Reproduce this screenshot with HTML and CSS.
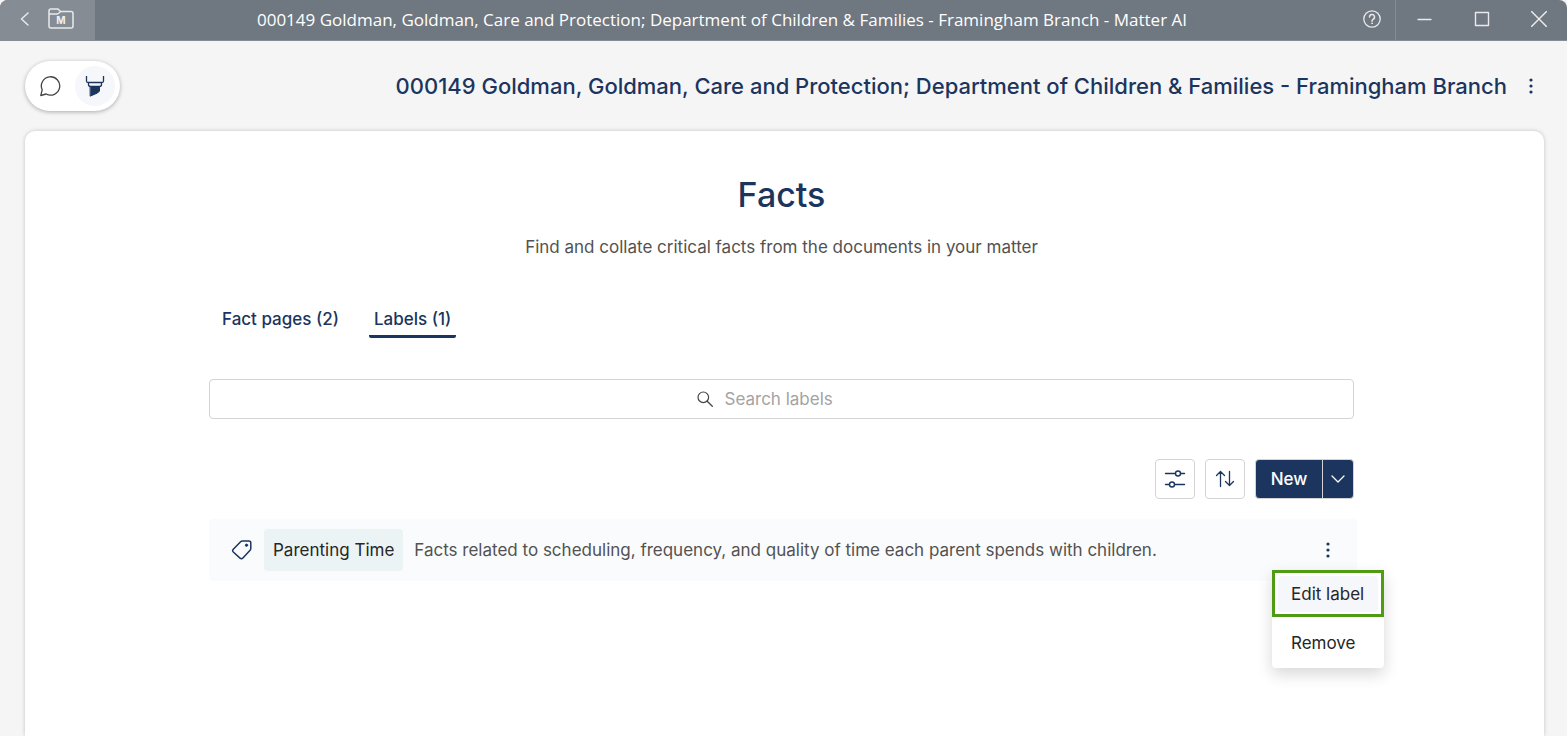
FILE: index.html
```
<!DOCTYPE html>
<html lang="en">
  <head>
    <meta charset="utf-8">
    <title>Matter AI</title>
    <link rel="stylesheet" href="styles.css">
  </head>
  <body>

    <header class="titlebar">
      <div class="titlebar-left">
        <button type="button" class="titlebar-btn back-btn" aria-label="Back">
          <svg width="10" height="16" viewBox="0 0 10 16"><path d="M8 2L1.500 8L8 14" stroke-width="1.500"/></svg>
        </button>
        <button type="button" class="titlebar-btn" aria-label="Matter">
          <svg width="26" height="22" viewBox="0 0 26 22">
            <path d="M1 5.500V3a2 2 0 0 1 2-2h7l2.500 2.500H23a2 2 0 0 1 2 2V18a2 2 0 0 1-2 2H3a2 2 0 0 1-2-2zM1 6h8.500L13 3.500" stroke-width="1.500"/>
            <text x="13" y="16" class="folder-letter">M</text>
          </svg>
        </button>
      </div>
      <div class="titlebar-text">000149 Goldman, Goldman, Care and Protection; Department of Children &amp; Families - Framingham Branch - Matter AI</div>
      <button type="button" class="titlebar-btn help-btn" aria-label="Help">
        <svg width="18" height="18" viewBox="0 0 18 18">
          <circle cx="9" cy="9" r="8.200" stroke-width="1.300"/>
          <path d="M6.500 7a2.500 2.500 0 1 1 3.700 2.200C9.400 9.700 9 10.100 9 11.200" stroke-width="1.500"/>
          <circle cx="9" cy="13.300" r=".5" stroke-width="1"/>
        </svg>
      </button>
      <div class="window-controls">
        <button type="button" class="titlebar-btn" aria-label="Minimize">
          <svg width="16" height="16" viewBox="0 0 16 16"><path d="M1 8.500h13" stroke-width="1.300"/></svg>
        </button>
        <button type="button" class="titlebar-btn" aria-label="Maximize">
          <svg width="16" height="16" viewBox="0 0 16 16"><path d="M1.500 1.500h13v13h-13z" stroke-width="1.400"/></svg>
        </button>
        <button type="button" class="titlebar-btn" aria-label="Close">
          <svg width="16" height="16" viewBox="0 0 16 16"><path d="M.5.500l15 15M15.500.500l-15 15" stroke-width="1.500"/></svg>
        </button>
      </div>
    </header>

    <div class="page-header">
      <nav class="mode-switch">
        <button type="button" class="mode-btn" aria-label="Chat">
          <svg width="22" height="22" viewBox="0 0 22 22" class="icon-gray"><path d="M3.200 14.800A9.200 9.200 0 1 1 7.100 19L1.800 20.500z" stroke-width="1.300"/></svg>
        </button>
        <button type="button" class="mode-btn active" aria-label="Facts">
          <svg width="20" height="22" viewBox="0 0 20 22">
            <path d="M1.500 1v5a1.500 1.500 0 0 0 1.500 1.500h14a1.500 1.500 0 0 0 1.500-1.500V1M3.500 7.500v2a2 2 0 0 0 2 2h9a2 2 0 0 0 2-2v-2" stroke-width="1.300" stroke-linecap="butt"/>
            <path d="M5.500 11.500h9v4.500l-2 2-7 3z" class="icon-solid" stroke-width="1"/>
          </svg>
        </button>
      </nav>
      <h2 class="matter-name">000149 Goldman, Goldman, Care and Protection; Department of Children &amp; Families - Framingham Branch</h2>
      <button type="button" class="more-btn" aria-label="Matter options">
        <svg width="6" height="18" viewBox="0 0 6 18" class="dots"><circle cx="3" cy="3" r="1.600"/><circle cx="3" cy="9" r="1.600"/><circle cx="3" cy="15" r="1.600"/></svg>
      </button>
    </div>

    <main class="card">
      <div class="content">
        <h1>Facts</h1>
        <p class="subtitle">Find and collate critical facts from the documents in your matter</p>

        <div class="tabs" role="tablist">
          <button type="button" class="tab" role="tab">Fact pages (2)</button>
          <button type="button" class="tab active" role="tab" aria-selected="true">Labels (1)</button>
        </div>

        <label class="search">
          <svg width="16" height="16" viewBox="0 0 16 16" class="icon-gray"><circle cx="6.300" cy="6.300" r="5.300" stroke-width="1.200"/><path d="M10.200 10.200l5.100 5.100" stroke-width="1.300"/></svg>
          <input type="text" class="search-input" placeholder="Search labels" aria-label="Search labels">
        </label>

        <div class="toolbar">
          <button type="button" class="icon-btn" aria-label="Filter">
            <svg width="22" height="22" viewBox="0 0 22 22"><path d="M1.500 5.500H11M17 5.500h3.500M1.500 16.500H5M11 16.500h9.500" stroke-width="1.400"/><circle cx="14" cy="5.500" r="2.500" stroke-width="1.400"/><circle cx="8" cy="16.500" r="2.500" stroke-width="1.400"/></svg>
          </button>
          <button type="button" class="icon-btn" aria-label="Sort">
            <svg width="20" height="18" viewBox="0 0 20 18"><path d="M5.500 16.500v-15M1.500 5.500l4-4 4 4M14.500 1.500v14M10.500 11.500l4 4 4-4" stroke-width="1.300"/></svg>
          </button>
          <div class="split-btn">
            <button type="button" class="new-btn">New</button>
            <button type="button" class="new-menu-btn" aria-label="More new options">
              <svg width="14" height="8" viewBox="0 0 14 8" class="icon-white"><path d="M1 1l6 6 6-6" stroke-width="1.300"/></svg>
            </button>
          </div>
        </div>

        <div class="label-row">
          <svg width="22" height="22" viewBox="0 0 22 22"><path d="M11.500 2h6.300a2 2 0 0 1 2 2v5.600a2.500 2.500 0 0 1-.7 1.700l-7.200 7.800a2 2 0 0 1-2.900 0L2.300 13a2 2 0 0 1 0-2.800l7.300-7.400a2.600 2.600 0 0 1 1.900-.8z" stroke-width="1.500"/><circle cx="15.500" cy="6.200" r="1.200" class="icon-solid" stroke-width=".8"/></svg>
          <span class="label-name">Parenting Time</span>
          <span class="label-text">Facts related to scheduling, frequency, and quality of time each parent spends with children.</span>
          <div class="row-actions">
            <button type="button" class="more-btn" aria-label="Label options">
              <svg width="6" height="18" viewBox="0 0 6 18" class="dots"><circle cx="3" cy="3" r="1.600"/><circle cx="3" cy="9" r="1.600"/><circle cx="3" cy="15" r="1.600"/></svg>
            </button>
            <div class="menu">
              <button type="button" class="menu-item selected"><span>Edit label</span></button>
              <button type="button" class="menu-item"><span>Remove</span></button>
            </div>
          </div>
        </div>
      </div>
    </main>

  </body>
</html>
```
FILE: styles.css
```
* {
  box-sizing: border-box;
}

body {
  margin: 0;
  min-height: 100vh;
  display: flex;
  flex-direction: column;
  background-color: #f5f5f5;
  color: #262626;
  font-family: Inter, "Liberation Sans", sans-serif;
  font-size: 17px;
  line-height: 24px;
}

button {
  border: none;
  padding: 0;
  background: none;
  color: inherit;
  font: inherit;
  cursor: pointer;
}

svg {
  display: block;
  flex: none;
  fill: none;
  stroke: #1c355e;
  stroke-linecap: round;
  stroke-linejoin: round;
}

.icon-gray {
  stroke: #454545;
}

.icon-white {
  stroke: #fff;
}

.icon-solid {
  fill: #1c355e;
}

.dots {
  fill: #1c355e;
  stroke: none;
}

/* window title bar */

.titlebar {
  display: flex;
  height: 41px;
  background-color: #6f7780;
  border-bottom: 1px solid #858c94;
  border-radius: 8px 8px 0 0;
  color: #fff;
  overflow: hidden;
}

.titlebar svg {
  stroke: #e8eaec;
}

.titlebar-left {
  display: flex;
  align-items: center;
  gap: 18px;
  width: 95px;
  padding: 0 20px 2px;
  background-color: #858c94;
}

.folder-letter {
  fill: #f0f1f2;
  stroke: none;
  text-anchor: middle;
  font-size: 10px;
  font-weight: 700;
}

.titlebar-text {
  flex: 1;
  text-align: center;
  font-family: "Open Sans", sans-serif;
  font-size: 17px;
  line-height: 39px;
  white-space: nowrap;
  overflow: hidden;
}

.titlebar-btn {
  display: flex;
  align-items: center;
  justify-content: center;
}

.help-btn {
  width: 46px;
  padding-bottom: 3px;
}

.window-controls {
  display: flex;
  border-left: 1px solid #858c94;
}

.window-controls .titlebar-btn {
  width: 57px;
  padding-bottom: 3px;
}

/* matter header */

.page-header {
  display: flex;
  align-items: center;
  padding: 20px 22px 20px 25px;
}

.mode-switch {
  display: flex;
  gap: 5px;
  padding: 5px;
  border-radius: 25px;
  background-color: #fff;
  box-shadow: 0 1px 4px rgba(0, 0, 0, 0.3);
}

.mode-btn {
  display: flex;
  align-items: center;
  justify-content: center;
  width: 40px;
  height: 40px;
  border-radius: 50%;
}

.mode-btn.active {
  background-color: #f5f7fa;
}

.matter-name {
  flex: 1;
  margin: 0 10px 0 0;
  text-align: right;
  color: #1c355e;
  font-size: 22px;
  font-weight: 500;
  line-height: 32px;
}

.more-btn {
  display: flex;
  align-items: center;
  justify-content: center;
  width: 28px;
  height: 28px;
}

/* facts card */

.card {
  flex: 1;
  margin: 0 23px 0 25px;
  padding: 44px 6px 0 0;
  border-radius: 10px 10px 0 0;
  background-color: #fff;
  box-shadow: 0 0 4px rgba(0, 0, 0, 0.2);
}

.content {
  max-width: 1145px;
  margin: 0 auto;
}

h1 {
  margin: 0;
  text-align: center;
  color: #1c355e;
  font-size: 34px;
  font-weight: 500;
  line-height: 40px;
}

.subtitle {
  margin: 20px 0 0;
  text-align: center;
  color: #525252;
}

.tabs {
  display: flex;
  gap: 25px;
  margin-top: 48px;
  padding-left: 8px;
}

.tab {
  padding: 0 5px 4px;
  border-bottom: 3px solid transparent;
  color: #1c355e;
  font-weight: 500;
}

.tab.active {
  border-bottom-color: #1c355e;
  border-radius: 2px;
}

.search {
  display: flex;
  align-items: center;
  justify-content: center;
  gap: 12px;
  height: 40px;
  margin-top: 41px;
  border: 1px solid #d4d4d4;
  border-radius: 4px;
}

.search-input {
  width: 142px;
  border: none;
  padding: 0;
  outline: none;
  background: none;
  font: inherit;
}

.search-input::placeholder {
  color: #a3a3a3;
  opacity: 1;
}

.toolbar {
  display: flex;
  justify-content: flex-end;
  gap: 10px;
  margin-top: 40px;
}

.icon-btn {
  display: flex;
  align-items: center;
  justify-content: center;
  width: 40px;
  height: 40px;
  border: 1px solid #d4d4d4;
  border-radius: 4px;
}

.split-btn {
  display: flex;
  height: 40px;
  border: 1px solid #d4d4d4;
  border-radius: 4px;
  background-color: #1c355e;
  color: #fff;
  overflow: hidden;
}

.new-btn {
  width: 66px;
  font-weight: 500;
}

.new-menu-btn {
  display: flex;
  align-items: center;
  justify-content: center;
  width: 31px;
  border-left: 1px solid #d4d4d4;
}

.label-row {
  display: flex;
  align-items: center;
  gap: 11px;
  min-height: 62px;
  margin: 20px -3px 0 0;
  padding: 0 15px 0 22px;
  border-radius: 4px;
  background-color: #fafbfd;
}

.label-name {
  padding: 9px 9px;
  border-radius: 4px;
  background-color: #ebf3f5;
}

.label-text {
  flex: 1;
  color: #525252;
}

.row-actions {
  position: relative;
}

.menu {
  position: absolute;
  top: 34px;
  right: -42px;
  width: 112px;
  border-radius: 4px;
  background-color: #fff;
  box-shadow: 0 6px 16px rgba(0, 0, 0, 0.16);
}

.menu-item {
  display: block;
  width: 100%;
  height: 51px;
  padding: 3px;
  text-align: left;
}

.menu-item span {
  display: block;
  padding: 10px 16px;
  border-radius: 4px;
  white-space: nowrap;
}

.menu-item.selected {
  height: 47px;
  border: 3px solid #4f9c14;
}

.menu-item.selected span {
  padding: 6px 13px;
  background-color: #f5f7fa;
}
```
